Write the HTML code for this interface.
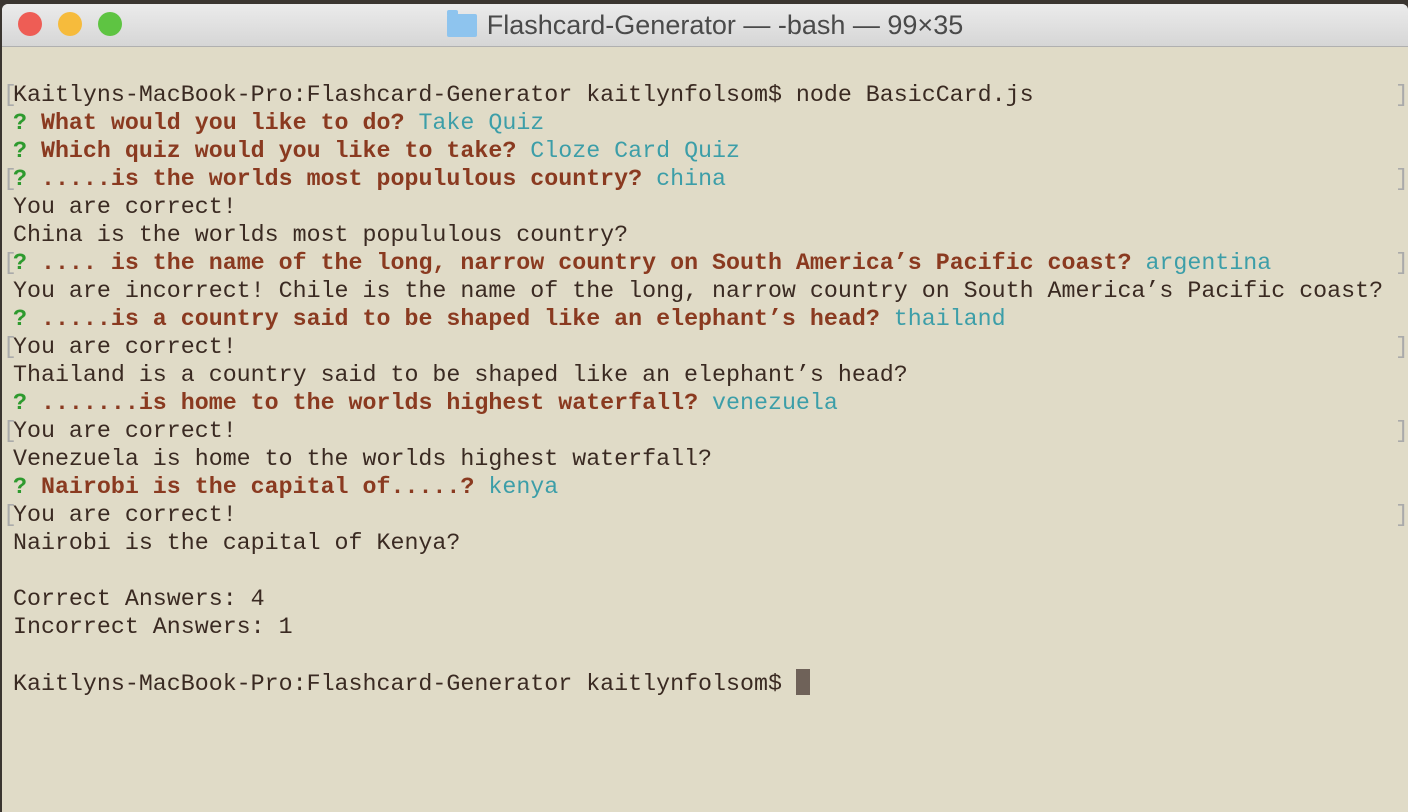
<!DOCTYPE html>
<html><head><style>
body{margin:0;width:1408px;height:812px;background:#3a3530;overflow:hidden;position:relative}
.win{position:absolute;left:2px;top:4px;width:1406px;height:808px;background:#e0dbc7;border-radius:6px 6px 0 0;overflow:hidden}
.tb{height:42px;background:linear-gradient(#ebebeb,#d6d6d6);border-bottom:1px solid #b0b0b0;position:relative}
.dot{position:absolute;top:8px;width:24px;height:24px;border-radius:50%}
.title{position:absolute;left:0;right:0;top:6px;text-align:center;font:27px "Liberation Sans",sans-serif;color:#4a4a4a}
.folder{display:inline-block;width:30px;height:23px;background:#8ec4ee;border-radius:2px;vertical-align:-3px;margin-right:10px;position:relative}
.folder:before{content:"";position:absolute;left:0;top:-4px;width:11px;height:5px;background:#8ec4ee;border-radius:2px 2px 0 0}
pre{position:absolute;left:11px;top:77px;margin:0;font:23.3px/28px "Liberation Mono",monospace;color:#3a2a22}
.r{color:#8a3a20;font-weight:bold}.c{color:#3c9ea8}.g{color:#2e9a2e;font-weight:bold}
.br{position:absolute;font:23px/28px "Liberation Mono",monospace;color:#aaa}
.cur{display:inline-block;width:14px;height:26px;background:#6f6259;vertical-align:-5px}
</style></head><body><div class="win">
<div class="tb"><div class="dot" style="left:16px;background:#ee5d55"></div><div class="dot" style="left:56px;background:#f6bb3c"></div><div class="dot" style="left:96px;background:#5ec442"></div>
<div class="title"><span class="folder"></span>Flashcard-Generator — -bash — 99×35</div></div>
<pre>Kaitlyns-MacBook-Pro:Flashcard-Generator kaitlynfolsom$ node BasicCard.js
<span class="g">?</span> <span class="r">What would you like to do?</span> <span class="c">Take Quiz</span>
<span class="g">?</span> <span class="r">Which quiz would you like to take?</span> <span class="c">Cloze Card Quiz</span>
<span class="g">?</span> <span class="r">.....is the worlds most popululous country?</span> <span class="c">china</span>
You are correct!
China is the worlds most popululous country?
<span class="g">?</span> <span class="r">.... is the name of the long, narrow country on South America’s Pacific coast?</span> <span class="c">argentina</span>
You are incorrect! Chile is the name of the long, narrow country on South America’s Pacific coast?
<span class="g">?</span> <span class="r">.....is a country said to be shaped like an elephant’s head?</span> <span class="c">thailand</span>
You are correct!
Thailand is a country said to be shaped like an elephant’s head?
<span class="g">?</span> <span class="r">.......is home to the worlds highest waterfall?</span> <span class="c">venezuela</span>
You are correct!
Venezuela is home to the worlds highest waterfall?
<span class="g">?</span> <span class="r">Nairobi is the capital of.....?</span> <span class="c">kenya</span>
You are correct!
Nairobi is the capital of Kenya?

Correct Answers: 4
Incorrect Answers: 1

Kaitlyns-MacBook-Pro:Flashcard-Generator kaitlynfolsom$ <span class="cur"></span></pre>
<div class="br" style="left:1px;top:77px">[</div><div class="br" style="left:1393px;top:77px">]</div>
<div class="br" style="left:1px;top:161px">[</div><div class="br" style="left:1393px;top:161px">]</div>
<div class="br" style="left:1px;top:245px">[</div><div class="br" style="left:1393px;top:245px">]</div>
<div class="br" style="left:1px;top:329px">[</div><div class="br" style="left:1393px;top:329px">]</div>
<div class="br" style="left:1px;top:413px">[</div><div class="br" style="left:1393px;top:413px">]</div>
<div class="br" style="left:1px;top:497px">[</div><div class="br" style="left:1393px;top:497px">]</div>
</div></body></html>
